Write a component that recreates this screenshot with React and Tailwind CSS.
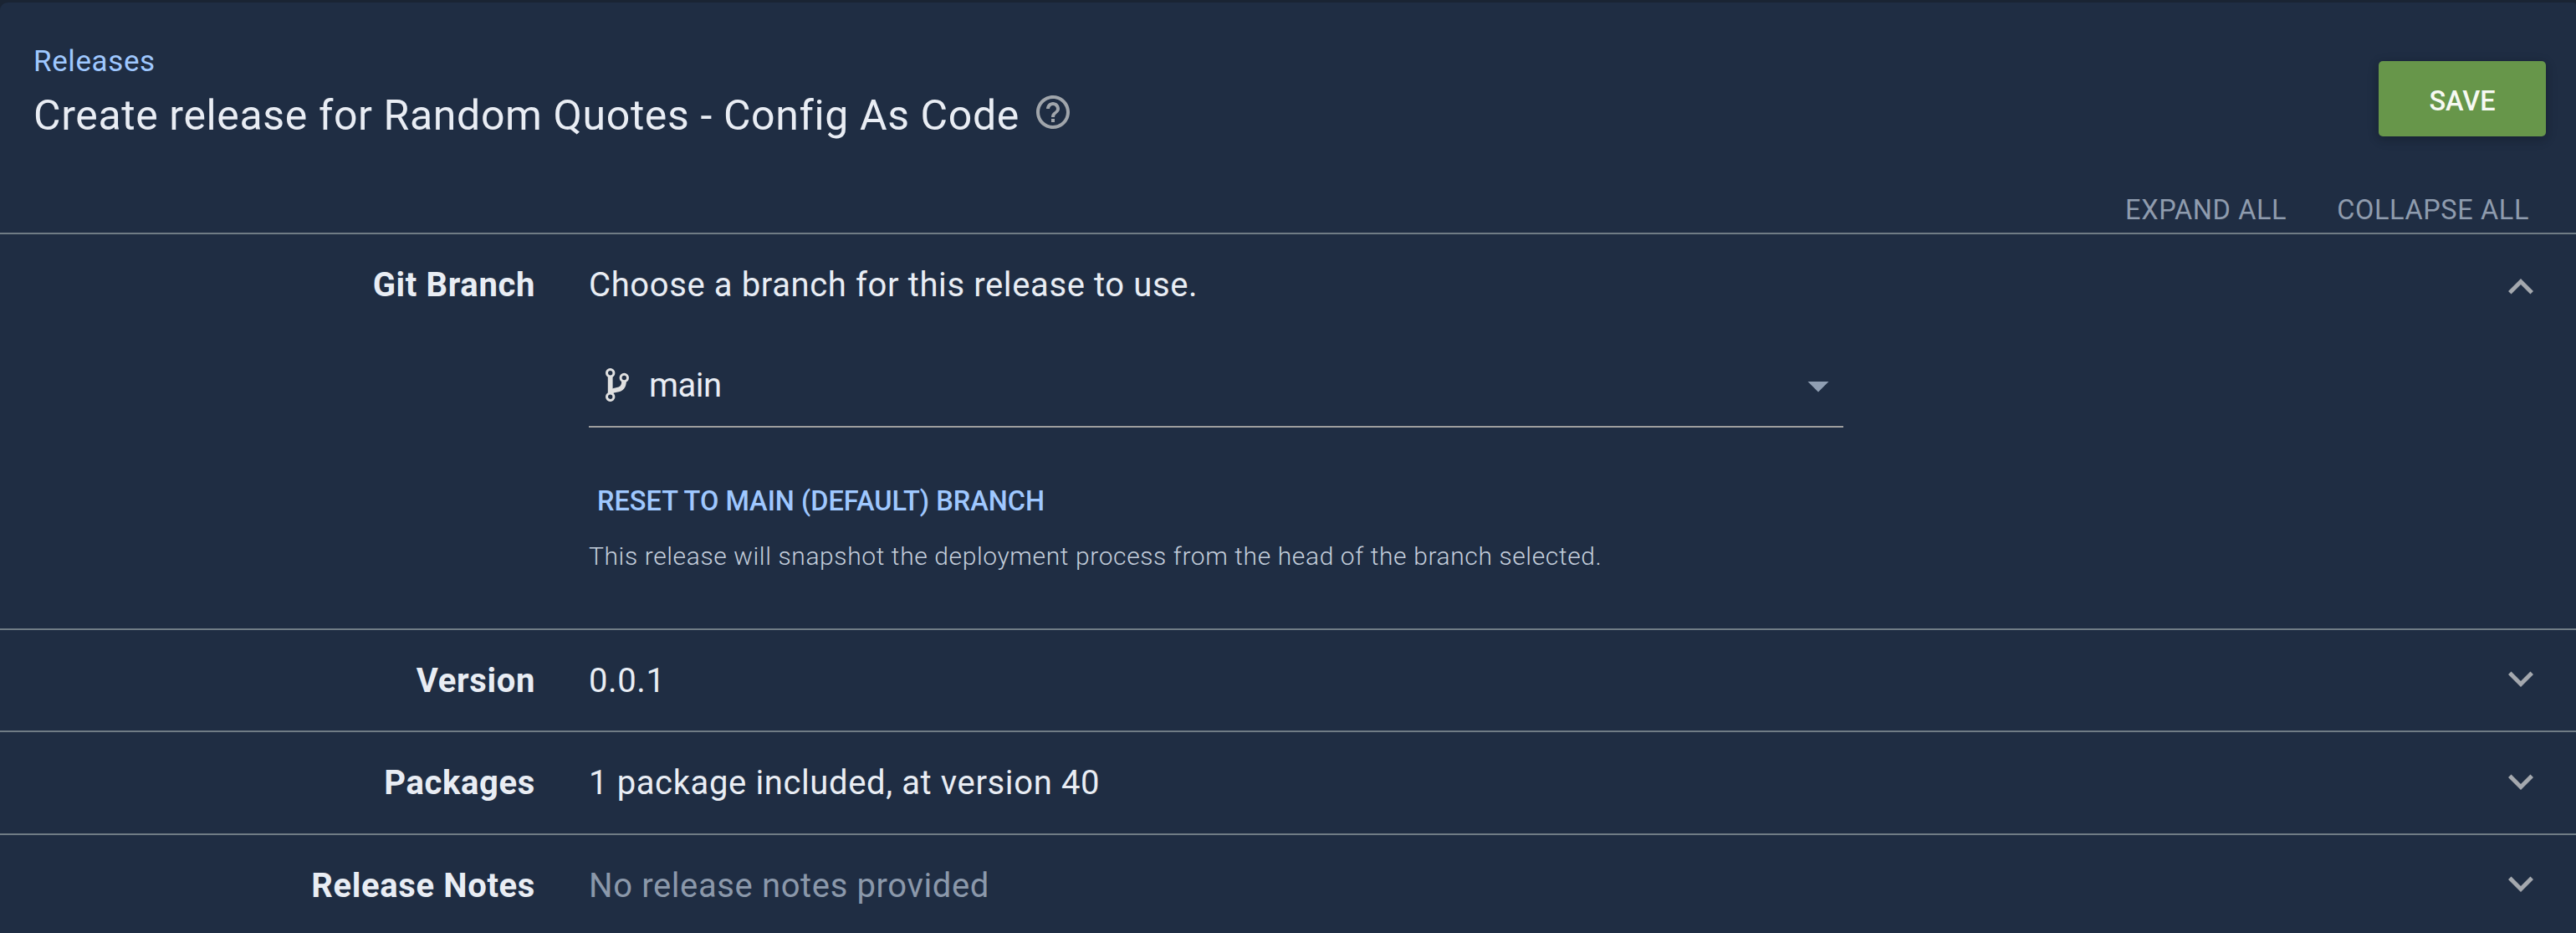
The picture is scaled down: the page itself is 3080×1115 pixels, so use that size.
import { MdArrowDropDown, MdExpandLess, MdExpandMore, MdHelpOutline } from "react-icons/md";

function BranchIcon() {
  return (
    <svg viewBox="0 0 28 40" className="h-[40px] w-[28px] text-[#e0e0e0]" fill="none" stroke="currentColor">
      <circle cx="5.7" cy="5.8" r="4.2" strokeWidth="3" />
      <circle cx="22.3" cy="11.5" r="4.2" strokeWidth="3" />
      <circle cx="5.7" cy="34.2" r="4.2" strokeWidth="3" />
      <path d="M5.7 9.6V30.4" strokeWidth="5.8" />
      <path d="M22.1 15.4C22 23 18.5 25.2 13 26C9 26.6 7.2 27.4 6 29.4" strokeWidth="5.6" />
    </svg>
  );
}

function Section({ label, open, className, iconClass, children }) {
  const Chevron = open ? MdExpandLess : MdExpandMore;
  return (
    <section className={`flex items-start border-t-2 border-[#707c85] ${className}`}>
      <h2 className="mt-[36px] w-[640px] shrink-0 text-right text-[40px] leading-[50px] font-bold tracking-[0.64px]">
        {label}
      </h2>
      <div className="mt-[36px] ml-[64px] w-[1500px] text-[40px] leading-[50px] tracking-[0.62px]">{children}</div>
      <Chevron className={`mr-[36px] ml-auto size-[60px] shrink-0 text-[#a4a8ae] ${iconClass}`} />
    </section>
  );
}

export default function App() {
  return (
    <div className="h-[1115px] w-[3080px] overflow-hidden bg-[#1a2433] pt-[3px] font-[Roboto,sans-serif] text-[#e9edf4]">
      <main className="flex h-[1112px] flex-col rounded-tl-[9px] rounded-tr-[3px] bg-[#1f2d43]">
        <header className="flex h-[275px] shrink-0 flex-col justify-between pb-[7px]">
          <div className="flex justify-between pr-[36px] pl-[40px]">
            <div className="pt-[51px]">
              <a className="block text-[35px] leading-[40px] tracking-[0.6px] text-[#9fc8ff]">Releases</a>
              <div className="mt-[14px] flex items-start">
                <h1 className="text-[50px] leading-[60px] tracking-[0.62px] whitespace-nowrap">
                  Create release for Random Quotes - Config As Code
                </h1>
                <MdHelpOutline className="mt-[2px] ml-[16px] size-[48px] text-[#a0a5ab]" />
              </div>
            </div>
            <button className="mt-[70px] h-[90px] w-[200px] rounded-[5px] bg-[#67964a] pt-[5px] text-[32.5px] leading-[40px] font-medium text-[#f6f9f3] shadow-[0_3px_15px_rgba(0,0,0,0.14),0_3px_10px_rgba(0,0,0,0.12)]">
              SAVE
            </button>
          </div>
          <div className="flex justify-end gap-[60px] pr-[56px] text-[32.5px] leading-[40px] tracking-[0.6px] text-[#8f9cae]">
            <button>EXPAND ALL</button>
            <button>COLLAPSE ALL</button>
          </div>
        </header>

        <Section label="Git Branch" open className="h-[473px]" iconClass="mt-[33px]">
          <p>Choose a branch for this release to use.</p>
          <div className="mt-[65px] flex h-[80px] items-start border-b-2 border-[#9e9e9e] pl-[20px]">
            <div className="mt-[9px]">
              <BranchIcon />
            </div>
            <span className="mt-[5px] ml-[24px] tracking-[-0.5px]">main</span>
            <MdArrowDropDown className="ml-auto size-[60px] text-[#8f9eb2]" />
          </div>
          <button className="mt-[68px] ml-[10px] block text-[32.5px] leading-[40px] font-medium tracking-normal text-[#9fc8ff]">
            RESET TO MAIN (DEFAULT) BRANCH
          </button>
          <p className="mt-[26px] text-[30px] leading-[40px] font-light tracking-[0.61px] text-[#c3cddb]">
            This release will snapshot the deployment process from the head of the branch selected.
          </p>
        </Section>
        <Section label="Version" className="h-[122px]" iconClass="mt-[28px]">
          0.0.1
        </Section>
        <Section label="Packages" className="h-[123px]" iconClass="mt-[29px]">
          1 package included, at version 40
        </Section>
        <Section label="Release Notes" className="h-[119px]" iconClass="mt-[28px]">
          <span className="text-[#8b98aa]">No release notes provided</span>
        </Section>
      </main>
    </div>
  );
}
